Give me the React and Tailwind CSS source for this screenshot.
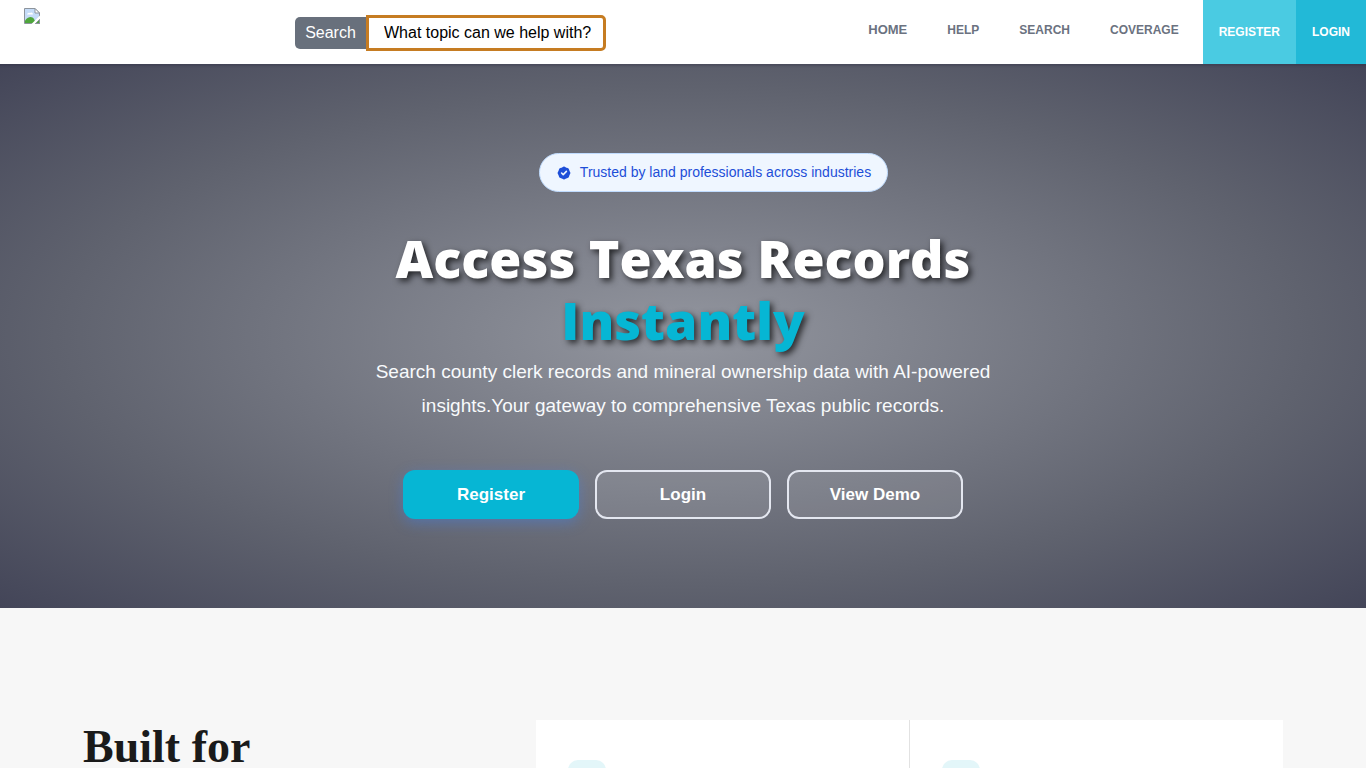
import React from "react";
import { HiBadgeCheck } from "react-icons/hi";

const navLinks = ["HELP", "SEARCH", "COVERAGE"];

function BrokenImage() {
  return (
    <svg width="16" height="16" viewBox="0 0 16 16" role="img" aria-label="Logo">
      <path d="M.5.5h10.500l4.500 4.500v10.500H.5z" fill="#c5dcf8" stroke="#8d949c" />
      <path d="M11 .5V5h4.500z" fill="#fff" stroke="#8d949c" />
      <path d="M3 6.500a2 2 0 0 1 3-1.500 1.800 1.800 0 0 1 3 1.500z" fill="#fff" />
      <path d="M1 15v-2.500c4-4.500 7-4 9-1.500l2 4z" fill="#4fa63c" />
      <path d="M7.500 16 16 7.500V11l-5 5z" fill="#fff" />
      <path d="M11.500 15.500h4V11.500z" fill="#4fa63c" stroke="#8d949c" />
    </svg>
  );
}

function Header() {
  return (
    <header className="flex h-16 shrink-0 items-stretch bg-white">
      <div className="w-[295px] pl-6 pt-2">
        <a href="#home" className="inline-block align-top">
          <BrokenImage />
        </a>
      </div>
      <form className="flex items-center pt-0.5" onSubmit={(e) => e.preventDefault()}>
        <label
          htmlFor="topic"
          className="flex h-8 w-[71px] items-center justify-center rounded-l-[5px] bg-[#68707c] text-base text-white"
        >
          Search
        </label>
        <input
          id="topic"
          type="text"
          defaultValue="What topic can we help with?"
          className="h-9 w-60 rounded-r-[5px] border-[3px] border-[#c67c22] bg-white pl-[15px] text-base text-black outline-none"
        />
      </form>
      <nav className="ml-auto flex items-stretch text-xs font-bold text-[#6b7280]">
        <div className="flex items-center gap-10 pb-1 pr-6">
          <a href="#home" className="text-[13px]">HOME</a>
          {navLinks.map((n) => (
            <a key={n} href={"#" + n.toLowerCase()}>{n}</a>
          ))}
        </div>
        <a href="#register" className="flex items-center bg-[#4acbe2] px-4 text-white">REGISTER</a>
        <a href="#login" className="flex items-center bg-[#22b9d7] px-4 text-white">LOGIN</a>
      </nav>
    </header>
  );
}

function Hero() {
  return (
    <section className="flex shrink-0 flex-col items-center bg-[radial-gradient(ellipse_at_center,#93969f_0%,#5f626e_65%,#434558_100%)] pb-[89px] pt-[89px] shadow-[inset_0_4px_2px_-2px_rgba(40,40,60,0.3)]">
      <div className="pl-[61px]">
        <div className="flex items-center gap-2 rounded-full border border-[#bfdbfe] bg-[#eff6ff] px-4 py-2 text-sm leading-[21px] text-[#1d4ed8]">
          <HiBadgeCheck className="size-4" />
          Trusted by land professionals across industries
        </div>
      </div>
      <h1 className="mt-[35px] text-center font-['Open_Sans','Noto_Sans',sans-serif] text-[52px] font-extrabold leading-[62px] text-white [text-shadow:3px_3px_6px_rgba(0,0,0,0.7)]">
        Access Texas Records
        <span className="block text-[#06b6d4]">Instantly</span>
      </h1>
      <p className="mt-1 max-w-[700px] text-center text-[19px] leading-[34px] text-[#f8fafc]">
        Search county clerk records and mineral ownership data with AI-powered
        <br />
        insights.Your gateway to comprehensive Texas public records.
      </p>
      <div className="mt-[47px] flex gap-4 text-[17px] font-bold text-white">
        <button type="button" className="h-[49px] w-44 rounded-xl bg-[#06b6d4] shadow-[0_4px_14px_rgba(59,130,246,0.4)]">Register</button>
        <button type="button" className="h-[49px] w-44 rounded-xl border-2 border-[#e4e7f0] bg-white/10">Login</button>
        <button type="button" className="h-[49px] w-44 rounded-xl border-2 border-[#e4e7f0] bg-white/10">View Demo</button>
      </div>
    </section>
  );
}

function Features() {
  return (
    <section className="flex-1 overflow-hidden bg-[#f7f7f7] pt-28">
      <div className="mx-auto grid max-w-[1200px] grid-cols-[1fr_2fr] gap-20">
        <h2 className="font-['Liberation_Serif',serif] text-[46px] font-bold leading-[53px] text-[#1a1a1a]">Built for</h2>
        <div className="grid grid-cols-2 gap-px bg-[#e2e2e2]">
          {[0, 1].map((i) => (
            <article key={i} className="bg-white px-8 py-10">
              <div className="size-[38px] rounded-[10px] bg-[#e3f6f9]" />
            </article>
          ))}
        </div>
      </div>
    </section>
  );
}

export default function App() {
  return (
    <div className="flex h-screen flex-col overflow-hidden font-['Liberation_Sans',sans-serif]">
      <Header />
      <Hero />
      <Features />
    </div>
  );
}
